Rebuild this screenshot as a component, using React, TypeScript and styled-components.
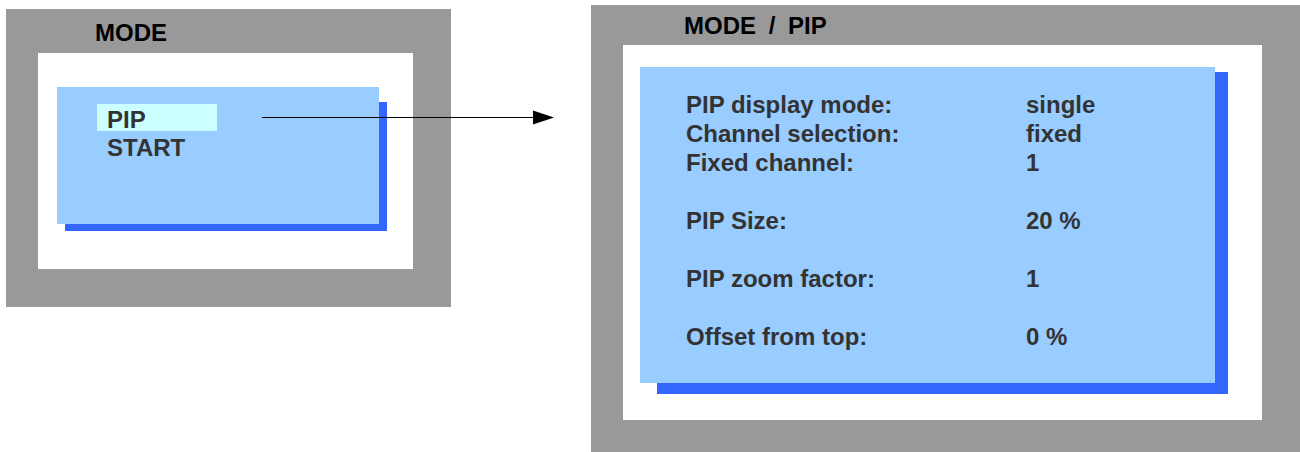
import React from 'react'
import styled, { createGlobalStyle } from 'styled-components'

const GlobalStyle = createGlobalStyle`
  html, body {
    margin: 0;
    padding: 0;
    background: #ffffff;
    overflow: hidden;
    font-family: "Liberation Sans", Arial, sans-serif;
  }
`

const Page = styled.div`
  position: relative;
  width: 1300px;
  height: 452px;
  display: flex;
  align-items: flex-start;
  overflow: hidden;
`

const Screen = styled.section<{ $x: number; $y: number; $w: number; $h: number }>`
  flex: none;
  margin-left: ${(p) => p.$x}px;
  margin-top: ${(p) => p.$y}px;
  width: ${(p) => p.$w}px;
  height: ${(p) => p.$h}px;
  box-sizing: border-box;
  background: #999999;
  padding: 0 38px 38px 32px;
  display: flex;
  flex-direction: column;
`

const Title = styled.h1<{ $h: number; $pt: number; $pl: number }>`
  margin: 0;
  flex: none;
  height: ${(p) => p.$h}px;
  box-sizing: border-box;
  padding-top: ${(p) => p.$pt}px;
  padding-left: ${(p) => p.$pl}px;
  line-height: 38px;
  font-size: 24px;
  font-weight: 700;
  color: #000000;
  white-space: pre;
  word-spacing: 6px;
`

const Canvas = styled.div<{ $pt: number; $pl: number }>`
  flex: 1;
  background: #ffffff;
  padding-top: ${(p) => p.$pt}px;
  padding-left: ${(p) => p.$pl}px;
`

const MenuBox = styled.div<{
  $w: number
  $h: number
  $sl: number
  $st: number
  $sr: number
  $sb: number
}>`
  position: relative;
  width: ${(p) => p.$w}px;
  height: ${(p) => p.$h}px;
  box-sizing: border-box;
  color: #333333;
  font-size: 24px;
  font-weight: 700;

  &::before {
    content: '';
    position: absolute;
    left: ${(p) => p.$sl}px;
    top: ${(p) => p.$st}px;
    right: -${(p) => p.$sr}px;
    bottom: -${(p) => p.$sb}px;
    background: #3366ff;
    z-index: 0;
  }

  &::after {
    content: '';
    position: absolute;
    inset: 0;
    background: #99ccff;
    z-index: 1;
  }
`

const MenuList = styled.ul`
  position: relative;
  z-index: 2;
  list-style: none;
  margin: 0;
  padding: 17px 0 0 40px;
  display: flex;
  flex-direction: column;
  gap: 1px;
`

const MenuItem = styled.li<{ $active?: boolean }>`
  width: 110px;
  height: 25px;
  padding: 2px 0 0 10px;
  box-sizing: content-box;
  line-height: 27px;
  background: ${(p) => (p.$active ? '#ccffff' : 'transparent')};
`

const Settings = styled.div`
  position: relative;
  z-index: 2;
  padding: 23px 0 0 46px;
  display: flex;
  flex-direction: column;
`

const Row = styled.div<{ $gap?: boolean }>`
  display: grid;
  grid-template-columns: 340px 1fr;
  height: 29px;
  line-height: 29px;
  margin-top: ${(p) => (p.$gap ? 29 : 0)}px;
  white-space: nowrap;
`

const Arrow = styled.svg`
  position: absolute;
  z-index: 5;
  left: 262px;
  top: 110px;
  width: 293px;
  height: 15px;
`

const rows = [
  { label: 'PIP display mode:', value: 'single' },
  { label: 'Channel selection:', value: 'fixed' },
  { label: 'Fixed channel:', value: '1' },
  { label: 'PIP Size:', value: '20 %', gap: true },
  { label: 'PIP zoom factor:', value: '1', gap: true },
  { label: 'Offset from top:', value: '0 %', gap: true },
]

export default function App() {
  return (
    <>
      <GlobalStyle />
      <Page>
        <Screen $x={6} $y={9} $w={445} $h={298}>
          <Title $h={44} $pt={5} $pl={57}>MODE</Title>
          <Canvas $pt={34} $pl={19}>
            <MenuBox $w={322} $h={137} $sl={8} $st={15} $sr={8} $sb={7}>
              <MenuList>
                <MenuItem $active>PIP</MenuItem>
                <MenuItem>START</MenuItem>
              </MenuList>
            </MenuBox>
          </Canvas>
        </Screen>

        <Screen $x={140} $y={5} $w={709} $h={453}>
          <Title $h={40} $pt={2} $pl={61}>MODE / PIP</Title>
          <Canvas $pt={22} $pl={17}>
            <MenuBox $w={575} $h={316} $sl={17} $st={5} $sr={13} $sb={11}>
              <Settings>
                {rows.map((r) => (
                  <Row key={r.label} $gap={r.gap}>
                    <span>{r.label}</span>
                    <span>{r.value}</span>
                  </Row>
                ))}
              </Settings>
            </MenuBox>
          </Canvas>
        </Screen>

        <Arrow viewBox="0 0 293 15">
          <line x1="0" y1="7.5" x2="272" y2="7.5" stroke="#000" strokeWidth="1.2" />
          <polygon points="271,0.5 271,14.5 292,7.5" fill="#000" />
        </Arrow>
      </Page>
    </>
  )
}
